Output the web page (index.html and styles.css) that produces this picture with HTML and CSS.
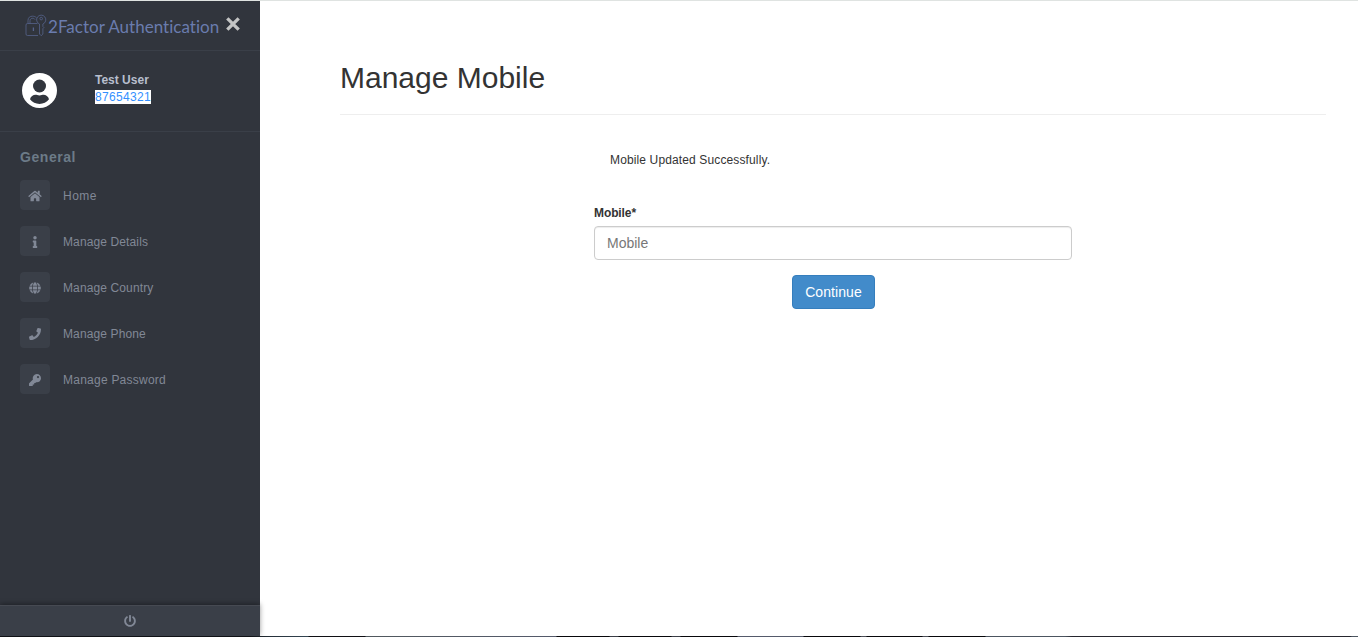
FILE: index.html
```html
<!DOCTYPE html>
<html lang="en">
<head>
<meta charset="utf-8">
<title>Manage Mobile</title>
<link rel="stylesheet" href="styles.css">
</head>
<body>
<div class="page">
  <nav class="sidebar">
    <div class="brand">
      <svg class="brand-logo" viewBox="0 0 22 24" fill="none" stroke="#56638c" stroke-width=".8">
        <path d="M3 9.500V6.500C3 3.500 5 2.200 7.500 2.200c1.700 0 3 .5 4 1.600"/>
        <path d="M5 9.500V6.700c0-2.700 3.800-3.200 5-1.200"/>
        <path d="M12.500 9.500H2.500Q1 9.500 1 11v9q0 1.500 1.500 1.500H13"/>
        <path d="M8.400 13.500v3.500" stroke-width="1.300"/>
        <path d="M14.500 10a4.600 4.600 0 1 1 3.400 0v2.500l1 1-1 1.200V20l-1.700 1.700-1.700-1.700Z"/>
        <circle cx="16.200" cy="4.600" r="1.300"/>
      </svg>
      <a class="brand-name" href="#">2Factor Authentication</a>
      <svg class="close" viewBox="0 0 14 14" stroke="#c4c5c5" stroke-width="3.300"><path d="M1.300 1.300l11.400 11.400M12.700 1.300L1.300 12.700"/></svg>
    </div>
    <div class="profile">
      <svg class="avatar" viewBox="0 0 35 35">
        <circle cx="17.500" cy="17.500" r="17.500" fill="#fff"/>
        <circle cx="17.500" cy="13" r="6.500" fill="#31353d"/>
        <path d="M8 26.300c.7-3 3.100-4.500 5.600-4.500 1 0 2 .7 3.900.7s2.900-.7 3.900-.7c2.500 0 4.900 1.500 5.600 4.500-2.300 3-5.700 4.600-9.500 4.600S10.300 29.300 8 26.300Z" fill="#31353d"/>
      </svg>
      <div class="profile-text">
        <div class="user-name">Test User</div>
        <div class="user-phone"><span class="selected">87654321</span></div>
      </div>
    </div>
    <div class="menu">
      <div class="menu-title">General</div>
      <a class="item" href="#"><span class="tile"><svg width="14" height="12" viewBox="0 0 576 512"><path d="M280.400 148.300L96 300.100V464a16 16 0 0 0 16 16l112-.3a16 16 0 0 0 16-16V368a16 16 0 0 1 16-16h64a16 16 0 0 1 16 16v95.600a16 16 0 0 0 16 16.100L464 480a16 16 0 0 0 16-16V300L295.700 148.300a12.200 12.200 0 0 0-15.300 0zM571.600 251.500L488 182.600V44a12 12 0 0 0-12-12h-56a12 12 0 0 0-12 12v72.600L318.500 43a48 48 0 0 0-61 0L4.300 251.500a12 12 0 0 0-1.600 16.900l25.500 31a12 12 0 0 0 16.900 1.600l235.200-193.700a12.200 12.200 0 0 1 15.300 0L530.900 301a12 12 0 0 0 16.900-1.600l25.500-31a12 12 0 0 0-1.700-16.900z"/></svg></span><span class="label label-wide">Home</span></a>
      <a class="item" href="#"><span class="tile"><svg width="6" height="12" viewBox="0 0 192 512"><path d="M20 424.200h20V279.800H20c-11 0-20-9-20-20V212c0-11 9-20 20-20h112c11 0 20 9 20 20v212.200h20c11 0 20 9 20 20V492c0 11-9 20-20 20H20c-11 0-20-9-20-20v-47.800c0-11 9-20 20-20zM96 0C56.200 0 24 32.200 24 72s32.200 72 72 72 72-32.200 72-72S135.800 0 96 0z"/></svg></span><span class="label">Manage Details</span></a>
      <a class="item" href="#"><span class="tile"><svg width="12" height="12" viewBox="0 0 496 512"><path d="M336.500 160C322 70.700 287.800 8 248 8s-74 62.700-88.500 152h177zM152 256c0 22.200 1.200 43.500 3.300 64h185.300c2.100-20.500 3.300-41.800 3.300-64s-1.200-43.500-3.300-64H155.300c-2.100 20.500-3.300 41.800-3.300 64zm324.700-96c-28.600-67.900-86.500-120.400-158-141.600 24.400 33.800 41.200 84.700 50 141.600h108zM177.200 18.400C105.800 39.600 47.800 92.100 19.300 160h108c8.700-56.900 25.500-107.800 49.900-141.600zM487.400 192H372.700c2.100 21 3.300 42.500 3.300 64s-1.200 43-3.300 64h114.600c5.500-20.500 8.600-41.800 8.600-64s-3.100-43.500-8.500-64zM120 256c0-21.500 1.200-43 3.300-64H8.600C3.200 212.500 0 233.800 0 256s3.200 43.500 8.600 64h114.600c-2-21-3.200-42.500-3.200-64zm39.500 96c14.500 89.300 48.700 152 88.500 152s74-62.700 88.500-152h-177zm159.300 141.600c71.400-21.200 129.400-73.700 158-141.600h-108c-8.800 56.900-25.600 107.800-50 141.600zM19.300 352c28.600 67.900 86.500 120.400 158 141.600-24.400-33.800-41.200-84.700-50-141.600h-108z"/></svg></span><span class="label">Manage Country</span></a>
      <a class="item" href="#"><span class="tile"><svg width="12" height="12" viewBox="0 0 512 512"><path d="M493.400 24.600l-104-24c-11.300-2.600-22.900 3.300-27.500 13.900l-48 112c-4.200 9.800-1.400 21.300 6.900 28l60.600 49.600c-36 76.700-98.900 140.500-177.200 177.200l-49.600-60.600c-6.800-8.300-18.200-11.100-28-6.900l-112 48C3.900 366.500-2 378.100.6 389.400l24 104C27.100 504.200 36.700 512 48 512c256.100 0 464-207.500 464-464 0-11.200-7.700-20.900-18.600-23.400z"/></svg></span><span class="label">Manage Phone</span></a>
      <a class="item" href="#"><span class="tile"><svg width="12" height="12" viewBox="0 0 512 512"><path d="M512 176c0 97.200-78.800 176-176 176-11.200 0-22.200-1.100-32.800-3.100l-24 27a24 24 0 0 1-17.900 8.100H224v40a24 24 0 0 1-24 24h-40v40a24 24 0 0 1-24 24H24a24 24 0 0 1-24-24v-78.100c0-6.400 2.500-12.500 7-17l161.800-161.800A176 176 0 0 1 336 0c97.500 0 176 78.500 176 176zM336 128a48 48 0 1 0 96 0 48 48 0 0 0-96 0z"/></svg></span><span class="label label-long">Manage Password</span></a>
    </div>
    <div class="power">
      <svg width="12" height="12" viewBox="0 0 512 512"><path d="M400 54.100c63 45 104 118.600 104 201.900 0 136.800-110.800 247.700-247.500 248C120 504.300 8.200 393 8 256.400 7.900 173.100 48.900 99.300 111.800 54.200c11.700-8.300 28-4.800 35 7.700L162.600 90c5.900 10.500 3.100 23.800-6.600 31-41.500 30.800-68 79.600-68 134.900-.1 92.300 74.500 168.100 168 168.100 91.600 0 168.600-74.200 168-169.100-.3-51.800-24.700-101.800-68.100-134-9.700-7.200-12.400-20.500-6.500-30.900l15.800-28.100c7-12.400 23.200-16.100 34.800-7.800zM296 264V24c0-13.300-10.700-24-24-24h-32c-13.300 0-24 10.700-24 24v240c0 13.300 10.700 24 24 24h32c13.300 0 24-10.700 24-24z"/></svg>
    </div>
  </nav>
  <main class="content">
    <h2 class="title">Manage Mobile</h2>
    <form class="form">
      <p class="message">Mobile Updated Successfully.</p>
      <label class="field-label" for="mobile">Mobile*</label>
      <input class="field" id="mobile" type="text" placeholder="Mobile">
      <button class="submit" type="button">Continue</button>
    </form>
  </main>
</div>
<div class="edge"></div>
</body>
</html>
```
FILE: styles.css
```css
* { box-sizing: border-box; }
body {
  margin: 0;
  height: 637px;
  display: flex;
  flex-direction: column;
  overflow: hidden;
  border-top: 1px solid #dfe3e1;
  background: #fff;
  color: #333;
  font: 12px/17px "Liberation Sans", Arial, sans-serif;
}
.page { display: flex; flex: 1; min-height: 0; }
.sidebar {
  width: 260px;
  display: flex;
  flex-direction: column;
  background: #31353d;
}
.brand {
  height: 50px;
  display: flex;
  align-items: flex-start;
  padding-left: 25px;
  border-bottom: 1px solid #3a3f48;
}
.brand-logo { width: 22px; height: 24px; margin-top: 13px; flex: none; }
.brand-name {
  width: 173px;
  margin: 16px 5px 0 1px;
  font: 17px/20px Lato, sans-serif;
  font-variant-ligatures: none;
  letter-spacing: .02px;
  color: #6a7cae;
  text-decoration: none;
  white-space: nowrap;
}
.close { width: 14px; height: 14px; margin-top: 16px; flex: none; }
.profile {
  height: 81px;
  display: flex;
  padding: 22px 0 0 22px;
  border-bottom: 1px solid #3a3f48;
}
.avatar { width: 35px; height: 35px; margin-right: 38px; }
.profile-text { margin-top: -1px; }
.user-name { font-weight: bold; color: #b8bfce; }
.user-phone { color: #3390ff; line-height: 17px; letter-spacing: .33px; }
.selected { background: #fff; }
.menu { flex: 1; padding: 15px 20px 0; }
.menu-title {
  height: 33px;
  font-size: 14px;
  line-height: 20px;
  font-weight: bold;
  letter-spacing: .55px;
  color: #6c7b88;
}
.item {
  display: flex;
  align-items: center;
  height: 30px;
  margin-bottom: 16px;
  color: #818896;
  text-decoration: none;
}
.tile {
  width: 30px;
  height: 30px;
  margin-right: 13px;
  display: flex;
  align-items: center;
  justify-content: center;
  border-radius: 4px;
  background: #3a3f48;
}
.tile svg, .power svg { fill: #818896; }
.tile svg { margin-top: 1px; }
.label { padding-top: 2px; letter-spacing: .12px; }
.label-wide { letter-spacing: .5px; }
.label-long { letter-spacing: .24px; }
.power {
  height: 31px;
  display: flex;
  align-items: center;
  justify-content: center;
  border-top: 1px solid #464a52;
  background: #3a3f48;
  box-shadow: 0 -1px 5px rgba(0, 0, 0, .4);
}
.content { flex: 1; padding: 60px 32px 0 80px; }
.title {
  height: 54px;
  margin: 0;
  border-bottom: 1px solid #eee;
  font-size: 30px;
  line-height: 33px;
  font-weight: normal;
}
.form {
  width: 478px;
  margin-left: 254px;
  padding-top: 37px;
  display: flex;
  flex-direction: column;
}
.message { margin: 0 0 36px 16px; letter-spacing: .13px; }
.field-label { font-weight: bold; letter-spacing: -.1px; margin-bottom: 4px; }
.field {
  height: 34px;
  padding: 6px 12px;
  border: 1px solid #ccc;
  border-radius: 4px;
  box-shadow: inset 0 1px 1px rgba(0, 0, 0, .075);
  font: 14px/20px "Liberation Sans", Arial, sans-serif;
}
.field::placeholder { color: #777; }
.submit {
  width: 83px;
  height: 34px;
  margin: 15px 0 0 198px;
  padding: 0;
  border: 1px solid #357ebd;
  border-radius: 4px;
  background: #428bca;
  color: #fff;
  font: 14px/20px "Liberation Sans", Arial, sans-serif;
  letter-spacing: .08px;
}
.edge {
  height: 1px;
  flex: none;
  background: linear-gradient(to right, #101216 0 250px, #263039 270px, #344653 308px, #101014 309px 365px, #50585e 366px, #555a6b 556px, #08080b 557px 609px, #3b3e47 610px 618px, #08080b 619px 671px, #3b3e47 672px 680px, #08080b 681px 737px, #555a6b 738px 803px, #08080b 804px 860px, #4b4e57 861px 866px, #08080b 867px 922px, #4b4e57 923px 928px, #08080b 929px 985px, #4c5560 986px 1065px, #26262e 1072px 1350px, #4c5560 1352px);
}
```
